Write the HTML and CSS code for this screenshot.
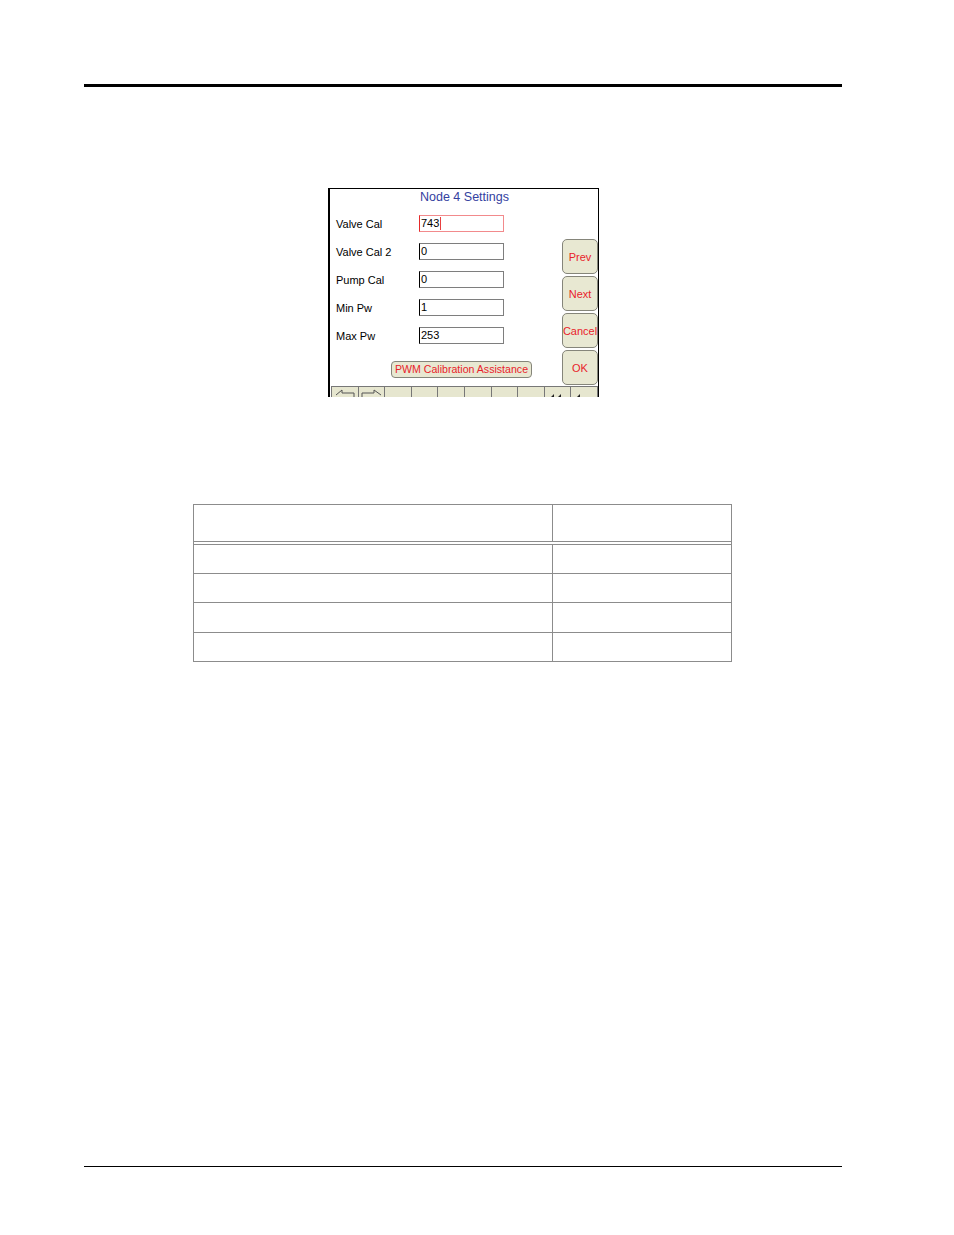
FILE: index.html
```html
<!DOCTYPE html>
<html>
<head>
<meta charset="utf-8">
<link rel="stylesheet" href="styles.css">
</head>
<body>
<div class="page">
  <div class="rule-top"></div>

  <div class="shot">
    <div class="shot-title">Node 4 Settings</div>
    <div class="shot-body">
      <div class="form">
        <div class="frow">
          <span class="flabel">Valve Cal</span>
          <span class="finput active">743<span class="caret"></span></span>
        </div>
        <div class="frow">
          <span class="flabel">Valve Cal 2</span>
          <span class="finput">0</span>
        </div>
        <div class="frow">
          <span class="flabel">Pump Cal</span>
          <span class="finput">0</span>
        </div>
        <div class="frow">
          <span class="flabel">Min Pw</span>
          <span class="finput">1</span>
        </div>
        <div class="frow">
          <span class="flabel">Max Pw</span>
          <span class="finput">253</span>
        </div>
        <div class="pwm">PWM Calibration Assistance</div>
      </div>
      <div class="sidebtns">
        <div class="sbtn">Prev</div>
        <div class="sbtn">Next</div>
        <div class="sbtn">Cancel</div>
        <div class="sbtn">OK</div>
      </div>
    </div>
    <div class="strip">
      <div class="cell"><svg width="26" height="10" viewBox="0 0 26 10"><path d="M4 8 L10 3 L10 6 L22 6 L22 10" fill="none" stroke="#555" stroke-width="1"/></svg></div>
      <div class="cell"><svg width="26" height="10" viewBox="0 0 26 10"><path d="M3 10 L3 6 L15 6 L15 3 L22 8" fill="none" stroke="#555" stroke-width="1"/></svg></div>
      <div class="cell"></div>
      <div class="cell"></div>
      <div class="cell"></div>
      <div class="cell"></div>
      <div class="cell"></div>
      <div class="cell"></div>
      <div class="cell"><svg width="26" height="10" viewBox="0 0 26 10"><path d="M6 10 L9 7 L9 10 Z M13 10 L16 7 L16 10 Z" fill="#222"/></svg></div>
      <div class="cell"><svg width="26" height="10" viewBox="0 0 26 10"><path d="M6 10 L9 7 L9 10 Z" fill="#222"/></svg></div>
    </div>
  </div>

  <div class="tbl">
    <div class="trow head"><div class="c1"></div><div class="c2"></div></div>
    <div class="trow"><div class="c1"></div><div class="c2"></div></div>
    <div class="trow"><div class="c1"></div><div class="c2"></div></div>
    <div class="trow tall"><div class="c1"></div><div class="c2"></div></div>
    <div class="trow last"><div class="c1"></div><div class="c2"></div></div>
  </div>

  <div class="rule-bottom"></div>
</div>
</body>
</html>
```

FILE: styles.css
```css
html, body {
  margin: 0;
  padding: 0;
  background: #fff;
}
body {
  font-family: "Liberation Sans", Arial, sans-serif;
  width: 954px;
  height: 1235px;
  overflow: hidden;
}
.page {
  padding-top: 84px;
}
.rule-top {
  margin-left: 84px;
  width: 758px;
  height: 3px;
  background: #000;
}
.shot {
  margin-left: 328px;
  margin-top: 101px;
  width: 271px;
  height: 209px;
  box-sizing: border-box;
  border-top: 1px solid #000;
  border-left: 2px solid #000;
  border-right: 1px solid #000;
  overflow: hidden;
  display: flex;
  flex-direction: column;
}
.shot-title {
  height: 22px;
  line-height: 16px;
  text-align: center;
  font-size: 12.5px;
  color: #3441a0;
  padding-left: 1px;
}
.shot-body {
  display: flex;
}
.form {
  width: 232px;
  padding-top: 8px;
  display: flex;
  flex-direction: column;
  gap: 11px;
}
.frow {
  display: flex;
  align-items: center;
  height: 17px;
}
.flabel {
  width: 83px;
  padding-left: 6px;
  font-size: 11px;
  color: #000;
}
.finput {
  position: relative;
  box-sizing: border-box;
  width: 85px;
  height: 17px;
  border: 1px solid #7e7e7e;
  border-left: 1px solid #000;
  font-size: 11px;
  line-height: 15px;
  padding-left: 1px;
  color: #000;
  display: flex;
  align-items: center;
}
.finput.active {
  border-color: #f28a8c;
  border-left-color: #e52a2a;
}
.caret {
  display: inline-block;
  width: 1px;
  height: 13px;
  margin-left: 1px;
  background: #e84040;
}
.pwm {
  margin-top: 6px;
  margin-left: 61px;
  width: 141px;
  height: 17px;
  box-sizing: border-box;
  border: 1px solid #85857a;
  border-radius: 4px;
  background: #e8e8d2;
  color: #e8222a;
  font-size: 10.6px;
  line-height: 15px;
  text-align: center;
  white-space: nowrap;
}
.sidebtns {
  padding-top: 32px;
  display: flex;
  flex-direction: column;
  gap: 2px;
}
.sbtn {
  width: 36px;
  height: 35px;
  box-sizing: border-box;
  border: 1px solid #85857a;
  border-radius: 5px;
  background: #e8e8d2;
  color: #e8222a;
  font-size: 11px;
  display: flex;
  align-items: center;
  justify-content: center;
}
.strip {
  margin-top: 1px;
  margin-left: 1px;
  height: 12px;
  display: flex;
  background: #e6e6cf;
  border-top: 1px solid #777;
}
.cell {
  flex: 1;
  border-left: 1px solid #777;
  overflow: hidden;
}
.cell:last-child {
  border-right: 1px solid #777;
}
.cell svg {
  display: block;
}
.tbl {
  margin-top: 107px;
  margin-left: 193px;
  width: 539px;
  box-sizing: border-box;
  border: 1px solid #8c8c8c;
}
.trow {
  display: flex;
  height: 29px;
  box-sizing: border-box;
  border-bottom: 1px solid #8c8c8c;
}
.trow.head {
  height: 40px;
  border-bottom: 4px double #8c8c8c;
}
.trow.tall {
  height: 30px;
}
.trow.last {
  border-bottom: none;
  height: 28px;
}
.c1 {
  width: 358px;
  border-right: 1px solid #8c8c8c;
}
.c2 {
  flex: 1;
}
.rule-bottom {
  margin-top: 504px;
  margin-left: 84px;
  width: 758px;
  height: 1px;
  background: #000;
}
```
